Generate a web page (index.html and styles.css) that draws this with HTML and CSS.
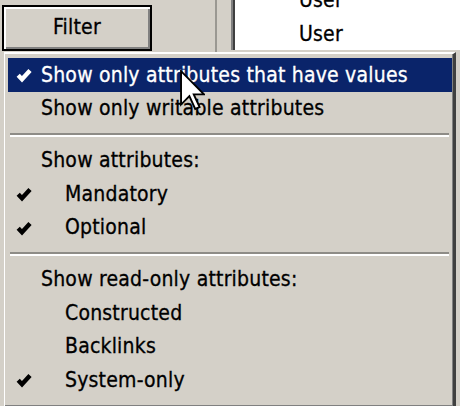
FILE: index.html
```html
<!DOCTYPE html>
<html>
<head>
<meta charset="utf-8">
<link rel="stylesheet" href="styles.css">
</head>
<body>
<div class="screen">
  <div class="top">
    <div class="btn-cell"><div class="btn">Filter</div></div>
    <div class="gap"></div>
    <div class="list">
      <div class="list-inner">
        <div class="row">User</div>
        <div class="row">User</div>
      </div>
    </div>
  </div>
  <div class="menu">
    <div class="item active">
      <svg class="check" viewBox="0 0 7 7"><path d="M0.6 3.1 L2.5 5.1 L6.5 0.8"/></svg>
      <span class="label">Show only attributes that have values</span>
    </div>
    <div class="item"><span class="label">Show only writable attributes</span></div>
    <div class="sep"></div>
    <div class="item"><span class="label">Show attributes:</span></div>
    <div class="item">
      <svg class="check" viewBox="0 0 7 7"><path d="M0.6 3.1 L2.5 5.1 L6.5 0.8"/></svg>
      <span class="label sub">Mandatory</span>
    </div>
    <div class="item">
      <svg class="check" viewBox="0 0 7 7"><path d="M0.6 3.1 L2.5 5.1 L6.5 0.8"/></svg>
      <span class="label sub">Optional</span>
    </div>
    <div class="sep"></div>
    <div class="item"><span class="label">Show read-only attributes:</span></div>
    <div class="item"><span class="label sub">Constructed</span></div>
    <div class="item"><span class="label sub">Backlinks</span></div>
    <div class="item">
      <svg class="check" viewBox="0 0 7 7"><path d="M0.6 3.1 L2.5 5.1 L6.5 0.8"/></svg>
      <span class="label sub">System-only</span>
    </div>
  </div>
  <svg class="cursor" viewBox="0 0 12 20"><polygon points="0.5,0.5 0.5,16.5 4.5,12.5 7.3,18.6 9.4,17.7 6.6,11.6 11.5,11.6"/></svg>
</div>
</body>
</html>
```

FILE: styles.css
```css
html, body {
  margin: 0;
  padding: 0;
}
body {
  background: #d4d0c8;
  font-family: "DejaVu Sans Condensed", "DejaVu Sans", sans-serif;
  font-size: 21px;
  letter-spacing: 0.2px;
  color: #000;
  -webkit-text-stroke: 0.3px currentColor;
}
.screen {
  position: relative;
  width: 460px;
  height: 406px;
  overflow: hidden;
  background: #d4d0c8;
}
.top {
  display: flex;
  height: 52px;
}
.btn-cell {
  width: 155px;
  padding: 5px 0 0 2px;
  box-sizing: border-box;
}
.btn {
  width: 150px;
  height: 46px;
  box-sizing: border-box;
  border: 2px solid #000;
  box-shadow: inset 2px 2px #fff, inset -2px -2px #808080;
  display: flex;
  align-items: center;
  justify-content: center;
  padding-bottom: 2px;
}
.gap {
  width: 62px;
  border-right: 2px solid #9a9892;
  height: 52px;
  box-sizing: border-box;
  margin-right: 14px;
}
.list {
  flex: 1;
  height: 50px;
  background: #fff;
  border-left: 2px solid #808080;
  box-shadow: inset 2px 0 #404040;
  overflow: hidden;
  padding-left: 66px;
}
.list-inner {
  margin-top: -17px;
}
.row {
  height: 34px;
  line-height: 34px;
}
.menu {
  margin-left: 4px;
  width: 452px;
  height: 356px;
  box-sizing: border-box;
  border-style: solid;
  border-width: 2px 3px 2px 1px;
  border-color: #fff #404040 #404040 #fff;
  box-shadow: inset -1px -1px #808080;
  padding: 4px 1px 3px 3px;
}
.item {
  position: relative;
  height: 33.5px;
  display: flex;
  align-items: center;
}
.item.active {
  background: #0a246a;
  color: #fff;
}
.check {
  position: absolute;
  left: 8px;
  top: 11px;
  width: 16px;
  height: 14px;
  fill: none;
  stroke: #000;
  stroke-width: 2.2;
}
.item.active .check {
  stroke: #fff;
}
.label {
  padding-left: 33px;
  white-space: nowrap;
}
.label.sub {
  padding-left: 57px;
}
.sep {
  height: 18.5px;
  padding-top: 7.5px;
  box-sizing: border-box;
  margin: 0 3px 0 2px;
}
.sep::before {
  content: "";
  display: block;
  height: 2px;
  background: #8e8c87;
  border-bottom: 2px solid #fff;
}
.cursor {
  position: absolute;
  left: 180px;
  top: 70px;
  width: 25px;
  height: 42px;
  fill: #fff;
  stroke: #000;
  stroke-width: 0.9;
}
```
